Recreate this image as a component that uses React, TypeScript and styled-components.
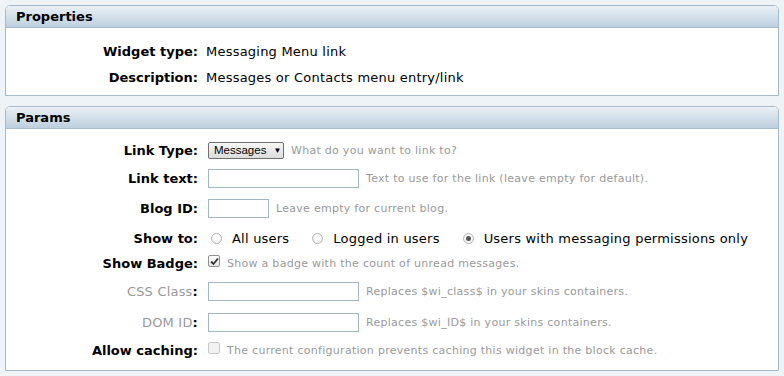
import React from 'react';
import styled, { createGlobalStyle } from 'styled-components';

const Global = createGlobalStyle`
  html, body {
    margin: 0;
    padding: 0;
    background: #eef3f7;
    font-family: 'DejaVu Sans', Verdana, sans-serif;
    color: #000;
  }
`;

const Page = styled.div`
  padding: 5px 5px 6px;
  display: flex;
  flex-direction: column;
  gap: 10px;
`;

const Panel = styled.section`
  border: 1px solid #a7bac9;
  border-radius: 5px 5px 0 0;
  background: #fff;
`;

const PanelHead = styled.h2`
  margin: 0;
  height: 21px;
  padding: 0 10px;
  display: flex;
  align-items: center;
  font-size: 13px;
  font-weight: bold;
  border-bottom: 1px solid #a7bac9;
  border-radius: 4px 4px 0 0;
  background: linear-gradient(to bottom, #eaf0f5 0%, #d3e0ea 50%, #bdcfdd 100%);
`;

const PanelBody = styled.div<{ $pt: number; $pb: number }>`
  padding: ${(p) => p.$pt}px 0 ${(p) => p.$pb}px;
  display: flex;
  flex-direction: column;
`;

const Row = styled.div<{ $h: number; $gap?: number }>`
  height: ${(p) => p.$h}px;
  display: grid;
  grid-template-columns: 192px 1fr;
  column-gap: ${(p) => p.$gap ?? 10}px;
  align-items: center;
`;

const Label = styled.div<{ $muted?: boolean }>`
  text-align: right;
  font-size: 13px;
  font-weight: ${(p) => (p.$muted ? 'normal' : 'bold')};
  color: ${(p) => (p.$muted ? '#999' : '#000')};
  letter-spacing: ${(p) => (p.$muted ? '0.2px' : '0')};
  white-space: nowrap;
`;

const Colon = styled.b`
  color: #000;
`;

const Value = styled.div`
  font-size: 13px;
  letter-spacing: 0.22px;
  display: flex;
  align-items: center;
  white-space: nowrap;
`;

const Note = styled.span`
  font-size: 11px;
  letter-spacing: 0.28px;
  color: #999;
  margin-left: 7px;
`;

const Select = styled.div`
  box-sizing: border-box;
  width: 76px;
  height: 17px;
  border: 1px solid #6f6f6f;
  border-radius: 2px;
  background: linear-gradient(to bottom, #f7f7f7, #dcdcdc);
  font-family: 'Liberation Sans', Arial, sans-serif;
  font-size: 11.5px;
  letter-spacing: 0;
  display: flex;
  align-items: center;
  padding: 0 0 0 5px;
`;

const Arrow = styled.span`
  font-size: 8px;
  margin-left: 7px;
`;

const Input = styled.div<{ $w: number }>`
  box-sizing: border-box;
  width: ${(p) => p.$w}px;
  height: 19px;
  border: 1px solid #a2b5c4;
  background: #fff;
`;

const Option = styled.label`
  display: flex;
  align-items: center;
  margin-right: 20px;
`;

const Radio = styled.span<{ $on?: boolean }>`
  box-sizing: border-box;
  width: 11px;
  height: 11px;
  margin: 0 10px 0 3px;
  border-radius: 50%;
  border: 1px solid #b4b4b4;
  background: radial-gradient(circle at 50% 40%, #fff 30%, #e4e4e4 100%);
  display: flex;
  align-items: center;
  justify-content: center;
  &::after {
    content: '';
    display: ${(p) => (p.$on ? 'block' : 'none')};
    width: 5px;
    height: 5px;
    border-radius: 50%;
    background: #555;
  }
`;

const Box = styled.span<{ $dim?: boolean }>`
  box-sizing: border-box;
  width: 12px;
  height: 12px;
  border: 1px solid ${(p) => (p.$dim ? '#c8c8c8' : '#8e8e8e')};
  border-radius: 2px;
  background: ${(p) => (p.$dim ? '#f2f2f2' : 'linear-gradient(to bottom, #fff, #e8e8e8)')};
  display: flex;
  align-items: center;
  justify-content: center;
  margin-top: -4px;
`;

const Check = () => (
  <svg width="9" height="9" viewBox="0 0 9 9">
    <path d="M1 4.5 L3.5 7 L8 1.5" fill="none" stroke="#333" strokeWidth="1.8" />
  </svg>
);

export default function App() {
  return (
    <>
      <Global />
      <Page>
        <Panel>
          <PanelHead>Properties</PanelHead>
          <PanelBody $pt={10} $pb={5}>
            <Row $h={26} $gap={8}>
              <Label>Widget type:</Label>
              <Value>Messaging Menu link</Value>
            </Row>
            <Row $h={26} $gap={8}>
              <Label>Description:</Label>
              <Value>Messages or Contacts menu entry/link</Value>
            </Row>
          </PanelBody>
        </Panel>
        <Panel>
          <PanelHead>Params</PanelHead>
          <PanelBody $pt={7} $pb={5}>
            <Row $h={28}>
              <Label>Link Type:</Label>
              <Value>
                <Select>
                  Messages<Arrow>▼</Arrow>
                </Select>
                <Note>What do you want to link to?</Note>
              </Value>
            </Row>
            <Row $h={29}>
              <Label>Link text:</Label>
              <Value>
                <Input $w={151} />
                <Note>Text to use for the link (leave empty for default).</Note>
              </Value>
            </Row>
            <Row $h={30}>
              <Label>Blog ID:</Label>
              <Value>
                <Input $w={61} />
                <Note>Leave empty for current blog.</Note>
              </Value>
            </Row>
            <Row $h={30}>
              <Label>Show to:</Label>
              <Value>
                <Option>
                  <Radio />
                  All users
                </Option>
                <Option>
                  <Radio />
                  Logged in users
                </Option>
                <Option>
                  <Radio $on />
                  Users with messaging permissions only
                </Option>
              </Value>
            </Row>
            <Row $h={20}>
              <Label>Show Badge:</Label>
              <Value>
                <Box>
                  <Check />
                </Box>
                <Note>Show a badge with the count of unread messages.</Note>
              </Value>
            </Row>
            <Row $h={36}>
              <Label $muted>
                CSS Class<Colon>:</Colon>
              </Label>
              <Value>
                <Input $w={151} />
                <Note>Replaces $wi_class$ in your skins containers.</Note>
              </Value>
            </Row>
            <Row $h={26}>
              <Label $muted>
                DOM ID<Colon>:</Colon>
              </Label>
              <Value>
                <Input $w={151} />
                <Note>Replaces $wi_ID$ in your skins containers.</Note>
              </Value>
            </Row>
            <Row $h={30}>
              <Label>Allow caching:</Label>
              <Value>
                <Box $dim />
                <Note>The current configuration prevents caching this widget in the block cache.</Note>
              </Value>
            </Row>
          </PanelBody>
        </Panel>
      </Page>
    </>
  );
}
